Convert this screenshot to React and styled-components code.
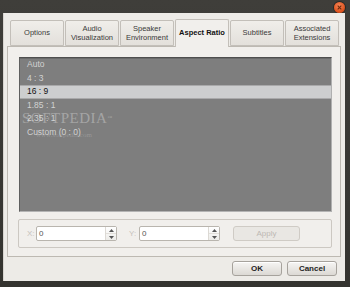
import React from "react";
import styled, { createGlobalStyle } from "styled-components";

const Global = createGlobalStyle`
  html, body { margin: 0; padding: 0; background: #3c3b37; }
  body { width: 350px; height: 287px; overflow: hidden; font-family: "Liberation Sans", Arial, sans-serif; }
  * { box-sizing: border-box; }
`;

const Frame = styled.div`
  width: 350px;
  height: 287px;
  background: linear-gradient(#3f3e3a, #34332f);
  display: flex;
  flex-direction: column;
  padding: 0 5px 6px 3px;
`;

const TitleBar = styled.div`
  height: 13px;
  display: flex;
  justify-content: flex-end;
  align-items: flex-start;
  padding-top: 2px;
`;

const CloseBtn = styled.div`
  width: 11px;
  height: 11px;
  border-radius: 50%;
  background: radial-gradient(circle at 45% 35%, #f7875a, #df5520 60%, #b8400f);
  box-shadow: 0 0 0 1px #2a2926;
  display: flex;
  align-items: center;
  justify-content: center;
`;

const Client = styled.div`
  flex: 1;
  background: #edebe7;
  display: flex;
  flex-direction: column;
  padding: 7px 4px 5px 3px;
  border-left: 1px solid #d8d5d0;
`;

const Notebook = styled.div`
  flex: 1;
  display: flex;
  flex-direction: column;
`;

const TabRow = styled.div`
  display: flex;
  align-items: flex-end;
  height: 26px;
  padding-left: 3px;
  gap: 1px;
  position: relative;
  z-index: 1;
`;

const Tab = styled.div`
  width: 54px;
  height: ${(p) => (p.$active ? "28px" : "26px")};
  margin-bottom: ${(p) => (p.$active ? "-1px" : "0")};
  border: 1px solid #c3bfb9;
  border-bottom: ${(p) => (p.$active ? "none" : "1px solid #c3bfb9")};
  border-radius: 2px 2px 0 0;
  background: ${(p) => (p.$active ? "#f1efec" : "linear-gradient(#f0eeea, #e3e0db)")};
  display: flex;
  align-items: center;
  justify-content: center;
  text-align: center;
  font-size: 7.5px;
  line-height: 9.5px;
  color: ${(p) => (p.$active ? "#111" : "#3a3a3a")};
  font-weight: ${(p) => (p.$active ? 700 : 400)};
  padding-bottom: ${(p) => (p.$active ? "1px" : "0")};
`;

const Pane = styled.div`
  flex: 1;
  border: 1px solid #bdb9b2;
  background: #f1efec;
  display: flex;
  flex-direction: column;
  gap: 7px;
  padding: 10px 8px 8px 11px;
`;

const List = styled.div`
  flex: 1;
  position: relative;
  background: #7e7e7e;
  border-top: 1px solid #4e4e4e;
  border-left: 1px solid #5f5f5f;
  border-right: 1px solid #b0b0b0;
  border-bottom: 1px solid #b4b4b4;
  box-shadow: inset 0 1px 0 #6a6a6a;
  overflow: hidden;
`;

const Item = styled.div`
  height: 13.5px;
  line-height: 13.5px;
  padding-left: 7px;
  font-size: 8.5px;
  color: ${(p) => (p.$selected ? "#111" : "#d2d2d2")};
  background: ${(p) => (p.$selected ? "#cdcecf" : "transparent")};
  box-shadow: ${(p) => (p.$selected ? "inset 0 1px 0 #a9a9aa, inset 0 -1px 0 #a9a9aa" : "none")};
`;

const Watermark = styled.div`
  position: absolute;
  left: 2px;
  top: 52px;
  font-family: "Liberation Serif", "Times New Roman", serif;
  font-size: 15px;
  letter-spacing: 0.5px;
  color: rgba(225, 225, 225, 0.4);
  pointer-events: none;
  line-height: 16px;
`;

const WatermarkTm = styled.sup`
  font-size: 5px;
  vertical-align: top;
`;

const WatermarkUrl = styled.div`
  position: absolute;
  left: 16px;
  top: 73px;
  font-family: "Liberation Serif", "Times New Roman", serif;
  font-size: 7px;
  color: rgba(200, 200, 200, 0.35);
  pointer-events: none;
`;

const Group = styled.div`
  height: 29px;
  margin-left: -1px;
  border: 1px solid #ccc8c2;
  border-radius: 2px;
  display: flex;
  align-items: center;
  padding-left: 8px;
`;

const AxisLabel = styled.span`
  font-size: 8px;
  color: #c6c2bc;
  width: ${(p) => p.$w}px;
  margin-left: ${(p) => p.$ml || 0}px;
`;

const Spin = styled.div`
  width: 81px;
  height: 15px;
  background: #fff;
  border: 1px solid #b9b5ae;
  border-radius: 2px;
  display: flex;
  align-items: stretch;
`;

const SpinValue = styled.div`
  flex: 1;
  font-size: 8px;
  line-height: 13px;
  padding-left: 2px;
  color: #555;
`;

const SpinButtons = styled.div`
  width: 11px;
  border-left: 1px solid #dcd9d4;
  display: flex;
  flex-direction: column;
  background: linear-gradient(#ffffff, #ecebe8);
`;

const SpinHalf = styled.div`
  flex: 1;
  display: flex;
  align-items: center;
  justify-content: center;
  & + & { border-top: 1px solid #e2dfda; }
`;

const Button = styled.div`
  width: ${(p) => p.$w}px;
  height: 15px;
  margin-left: ${(p) => p.$ml || 0}px;
  border: 1px solid ${(p) => (p.$disabled ? "#cfcbc5" : "#a6a29c")};
  border-radius: 3px;
  background: ${(p) => (p.$disabled ? "#e9e7e3" : "linear-gradient(#f6f5f3, #dcd9d4)")};
  color: ${(p) => (p.$disabled ? "#bdb9b3" : "#1e1e1e")};
  font-size: 8px;
  font-weight: ${(p) => (p.$disabled ? 400 : 700)};
  display: flex;
  align-items: center;
  justify-content: center;
  box-shadow: ${(p) => (p.$disabled ? "none" : "inset 0 1px 0 #ffffff")};
`;

const ButtonRow = styled.div`
  display: flex;
  justify-content: flex-end;
  gap: 5px;
  padding: 4px 4px 0 0;
`;

const Arrow = ({ up }) => (
  <svg width="5" height="3" viewBox="0 0 5 3">
    <path d={up ? "M0 3 L2.5 0 L5 3 Z" : "M0 0 L5 0 L2.5 3 Z"} fill="#555" />
  </svg>
);

const SpinBox = ({ value }) => (
  <Spin>
    <SpinValue>{value}</SpinValue>
    <SpinButtons>
      <SpinHalf><Arrow up /></SpinHalf>
      <SpinHalf><Arrow /></SpinHalf>
    </SpinButtons>
  </Spin>
);

const tabs = [
  ["Options"],
  ["Audio", "Visualization"],
  ["Speaker", "Environment"],
  ["Aspect Ratio"],
  ["Subtitles"],
  ["Associated", "Extensions"],
];

const items = ["Auto", "4 : 3", "16 : 9", "1.85 : 1", "2.35 : 1", "Custom (0 : 0)"];

export default function App() {
  return (
    <>
      <Global />
      <Frame>
        <TitleBar>
          <CloseBtn>
            <svg width="5" height="5" viewBox="0 0 5 5">
              <path d="M0.7 0.7 L4.3 4.3 M4.3 0.7 L0.7 4.3" stroke="#6b2a0c" strokeWidth="1.1" />
            </svg>
          </CloseBtn>
        </TitleBar>
        <Client>
          <Notebook>
            <TabRow>
              {tabs.map((t, i) => (
                <Tab key={i} $active={i === 3}>
                  <div>
                    {t.map((line, j) => (
                      <div key={j}>{line}</div>
                    ))}
                  </div>
                </Tab>
              ))}
            </TabRow>
            <Pane>
              <List>
                {items.map((it, i) => (
                  <Item key={i} $selected={i === 2}>{it}</Item>
                ))}
                <Watermark>SOFTPEDIA<WatermarkTm>™</WatermarkTm></Watermark>
                <WatermarkUrl>www.softpedia.com</WatermarkUrl>
              </List>
              <Group>
                <AxisLabel $w={9}>X:</AxisLabel>
                <SpinBox value="0" />
                <AxisLabel $w={10} $ml={12}>Y:</AxisLabel>
                <SpinBox value="0" />
                <Button $w={67} $ml={13} $disabled>Apply</Button>
              </Group>
            </Pane>
          </Notebook>
          <ButtonRow>
            <Button $w={50}>OK</Button>
            <Button $w={50}>Cancel</Button>
          </ButtonRow>
        </Client>
      </Frame>
    </>
  );
}
